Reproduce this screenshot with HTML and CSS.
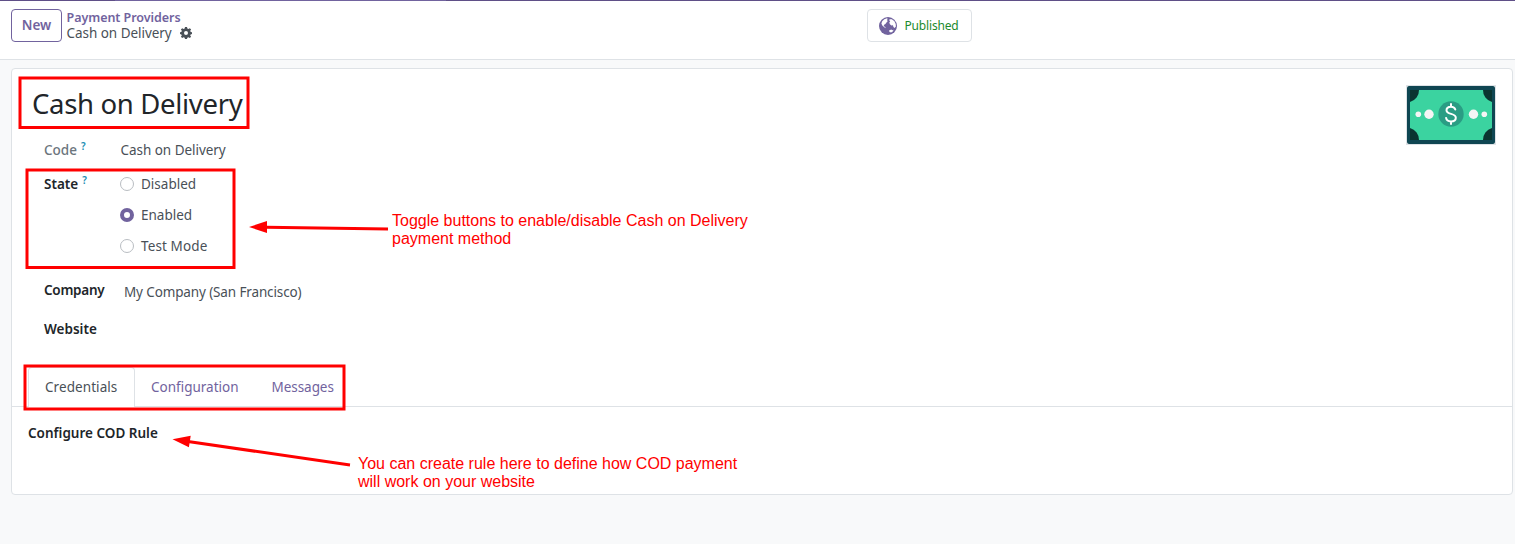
FILE: index.html
```html
<!DOCTYPE html>
<html lang="en">
<head>
<meta charset="utf-8">
<title>Cash on Delivery</title>
<link rel="stylesheet" href="styles.css">
</head>
<body>
<header class="control-panel">
  <button class="btn-new"><span class="t-new">New</span></button>
  <nav class="breadcrumb">
    <a class="crumb-parent"><span class="t-parent">Payment Providers</span></a>
    <div class="crumb-current"><span class="t-current">Cash on Delivery</span>
      <svg class="gear" viewBox="0 0 24 24"><path fill="#495057" fill-rule="evenodd" d="M10 0h4l.7 3.2 2.2.9L19.700 2.300l2.500 2.600-1.700 2.700.9 2.200 2.600.500v3.800l-2.700.700-.9 2.100 1.800 2.700-2.600 2.600-2.700-1.800-2.200.9L14 24h-4l-.700-2.700-2.200-.9-2.700 1.800-2.600-2.600 1.800-2.700-.9-2.100L0 14.100v-3.800l2.700-.5.9-2.200-1.800-2.700 2.600-2.600 2.700 1.800 2.200-.9zM12 8a4 4 0 1 0 0 8 4 4 0 0 0 0-8z"/></svg>
    </div>
  </nav>
  <button class="stat-button">
    <svg class="globe" viewBox="0 0 18 18"><circle cx="9" cy="9" r="9" fill="#71639e"/><path fill="#fff" d="M3.200 4.200L5.300 2.200l2.700-.9.800.8-1 1 1 .8L7.500 5.400 6.400 7l-1.600 1 .2 1.200 1.300.8.300 1.200-1.600-1.200L3.300 8.500 2.400 6.500zM10.500 2.200l2.300.1 2.600 2 1.300 2.600.2 2.500-1.300 1.500-1.200-.9-.4-1.800-1.600.3-1.500-1.200-.6-1.700.9-1.300-.9-.9z"/><path fill="#fff" d="M10.200 13.300l2.300-.7.600.7 1.500-.5-.8 1.700-1.700.9-1.700-.5z"/></svg>
    <span class="t-pub">Published</span>
  </button>
</header>
<main class="sheet">
  <div class="title-row">
    <h1 class="title"><span class="t-title">Cash on Delivery</span></h1>
    <svg class="avatar" viewBox="0 0 90 60">
      <rect x=".5" y=".5" width="89" height="59" fill="#fff" stroke="#dee2e6"/>
      <rect x="1" y="1" width="88" height="58" rx="2" fill="#0f4652"/>
      <rect x="4" y="5" width="82" height="50" fill="#3bd3a0"/>
      <path fill="#0a3530" d="M4 5h9a12 12 0 0 1-9 12zM86 5h-9a12 12 0 0 0 9 12zM4 55h9a12 12 0 0 0-9-12zM86 55h-9a12 12 0 0 1 9-12z"/>
      <circle cx="45" cy="29" r="12.700" fill="#2a9d84"/>
      <g fill="#f5f5f5"><circle cx="12.300" cy="29.200" r="2.800"/><circle cx="23" cy="29.200" r="4.700"/><circle cx="67.500" cy="29.200" r="4.700"/><circle cx="78.300" cy="29.200" r="2.800"/></g>
      <path fill="none" stroke="#fff" stroke-width="2" stroke-linecap="round" d="M45 19v2.500M45 36.500V39M49.300 24.500c-.6-2-2.300-2.800-4.300-2.800-2.600 0-4.500 1.300-4.500 3.500 0 4.700 9.300 2.700 9.300 7.500 0 2.400-2.200 3.700-4.800 3.700-2.400 0-4.500-1.100-4.900-3.500"/>
    </svg>
  </div>
  <div class="field code"><label class="muted"><span class="t-code">Code</span><sup>?</sup></label><span class="t-val">Cash on Delivery</span></div>
  <div class="field state"><label><span class="t-state">State</span><sup>?</sup></label>
    <div class="radios">
      <div class="radio"><i class="dot"></i><span class="t-dis">Disabled</span></div>
      <div class="radio"><i class="dot on"></i><span class="t-en">Enabled</span></div>
      <div class="radio"><i class="dot"></i><span class="t-test">Test Mode</span></div>
    </div>
  </div>
  <div class="field company"><label><span class="t-comp">Company</span></label><span class="company-value t-my">My Company (San Francisco)</span></div>
  <div class="field website"><label><span class="t-web">Website</span></label></div>
  <div class="tabs">
    <a class="tab active"><span class="t-cred">Credentials</span></a>
    <a class="tab"><span class="t-conf">Configuration</span></a>
    <a class="tab"><span class="t-msg">Messages</span></a>
  </div>
  <div class="pane"><span class="t-rule">Configure COD Rule</span></div>
</main>
<svg class="marks" viewBox="0 0 1515 544">
  <g fill="none" stroke="#f00" stroke-width="3">
    <rect x="20" y="78" width="228" height="49.500"/>
    <rect x="27" y="170" width="207" height="97.500"/>
    <rect x="25" y="366" width="319" height="43"/>
    <path d="M266 227.300L388 229M188 441.500L350 465"/>
  </g>
  <path fill="#f00" d="M249 227l18-6v12zM172.500 439.300l18.200-3.500-1.800 11.500z"/>
</svg>
<p class="note note-toggle">Toggle buttons to enable/disable Cash on Delivery<br>payment method</p>
<p class="note note-rule">You can create rule here to define how COD payment<br>will work on your website</p>
</body>
</html>
```
FILE: styles.css
```css
* { box-sizing: border-box; }
body { margin: 0; height: 544px; overflow: hidden; position: relative; background: #f8f9fa; color: #495057; font: 13.5px/20px "Noto Sans", sans-serif; }
span { white-space: nowrap; }
.control-panel { height: 60px; display: flex; align-items: flex-start; padding: 9px 0 0 11px; background: linear-gradient(90deg, #5f4f87 115px, #71639e 115px, #71639e 446px, #5f4f87 446px) top / 100% 1px no-repeat, #fff; border-bottom: 1px solid #dee2e6; }
button { background: #fff; font: inherit; padding: 0; display: flex; align-items: center; justify-content: center; }
.btn-new { width: 51px; height: 33px; padding-bottom: 1px; border: 1px solid #71639e; border-radius: 4px; color: #71639e; font-weight: 600; }
.breadcrumb { margin-left: 4.500px; width: 800.500px; line-height: 16px; }
.crumb-parent { display: block; padding-top: 1px; height: 16px; color: #71639e; font-size: 12.500px; font-weight: 600; letter-spacing: -0.050px; }
.crumb-current { display: flex; align-items: center; gap: 8px; }
.t-current, .t-val { letter-spacing: -0.040px; }
.t-val { margin-left: 0.500px; }
.gear { width: 12px; height: 12px; }
.stat-button { width: 105px; height: 33px; border: 1px solid #dee2e6; border-radius: 4px; gap: 7px; padding-right: 1px; color: #1b8a2c; font-size: 12px; }
.t-pub { letter-spacing: -0.150px; }
.globe { width: 18px; height: 18px; }
.sheet { margin: 8px 2px 0 11px; height: 427px; background: #fff; border: 1px solid #dee2e6; border-radius: 4px; }
.title-row { height: 70px; padding: 16px 16px 0 20px; display: flex; justify-content: space-between; }
.title { margin: 0; font-size: 27.500px; font-weight: 400; line-height: 38px; letter-spacing: -0.320px; color: #212529; }
.avatar { width: 90px; height: 60px; }
.field { display: flex; padding-left: 32px; }
.field label { width: 76px; color: #212529; font-weight: 600; }
.field .muted { color: #6c757d; font-weight: 500; }
sup { color: #1b8db3; font-size: 10px; line-height: 10px; vertical-align: 5px; margin-left: 4px; font-weight: 600; }
.code { height: 34px; padding-top: 1px; }
.state { height: 106px; padding-top: 1px; }
.radios { display: flex; flex-direction: column; gap: 11px; }
.radio { height: 20px; display: flex; align-items: center; gap: 7px; }
.t-test { letter-spacing: 0.120px; }
.dot { width: 14px; height: 14px; border: 1px solid #b9bdc2; border-radius: 50%; background: #fff; }
.dot.on { border: 4px solid #71639e; }
.company { height: 39px; padding-top: 1px; }
.t-comp { letter-spacing: -0.270px; }
.company-value { margin: 2px 0 0 4px; letter-spacing: -0.130px; }
.website { height: 49px; padding-top: 1px; }
.tabs { height: 40px; display: flex; padding-left: 16px; border-bottom: 1px solid #dee2e6; }
.tab { height: 40px; padding: 9px 16px 0 15px; color: #71639e; border: 1px solid transparent; border-bottom: 0; }
.tab.active { width: 107px; padding-left: 16px; background: #fff; color: #495057; border-color: #dee2e6; border-radius: 4px 4px 0 0; }
.t-cred { letter-spacing: 0.070px; }
.t-msg { letter-spacing: -0.060px; }
.pane { padding: 16px; color: #212529; font-weight: 600; }
.marks { position: absolute; left: 0; top: 0; width: 1515px; height: 544px; }
.note { position: absolute; margin: 0; color: #f00; font: 16px/18px "Liberation Sans", sans-serif; white-space: nowrap; }
.note-toggle { left: 392px; top: 212px; }
.note-rule { left: 358px; top: 455px; }
```
